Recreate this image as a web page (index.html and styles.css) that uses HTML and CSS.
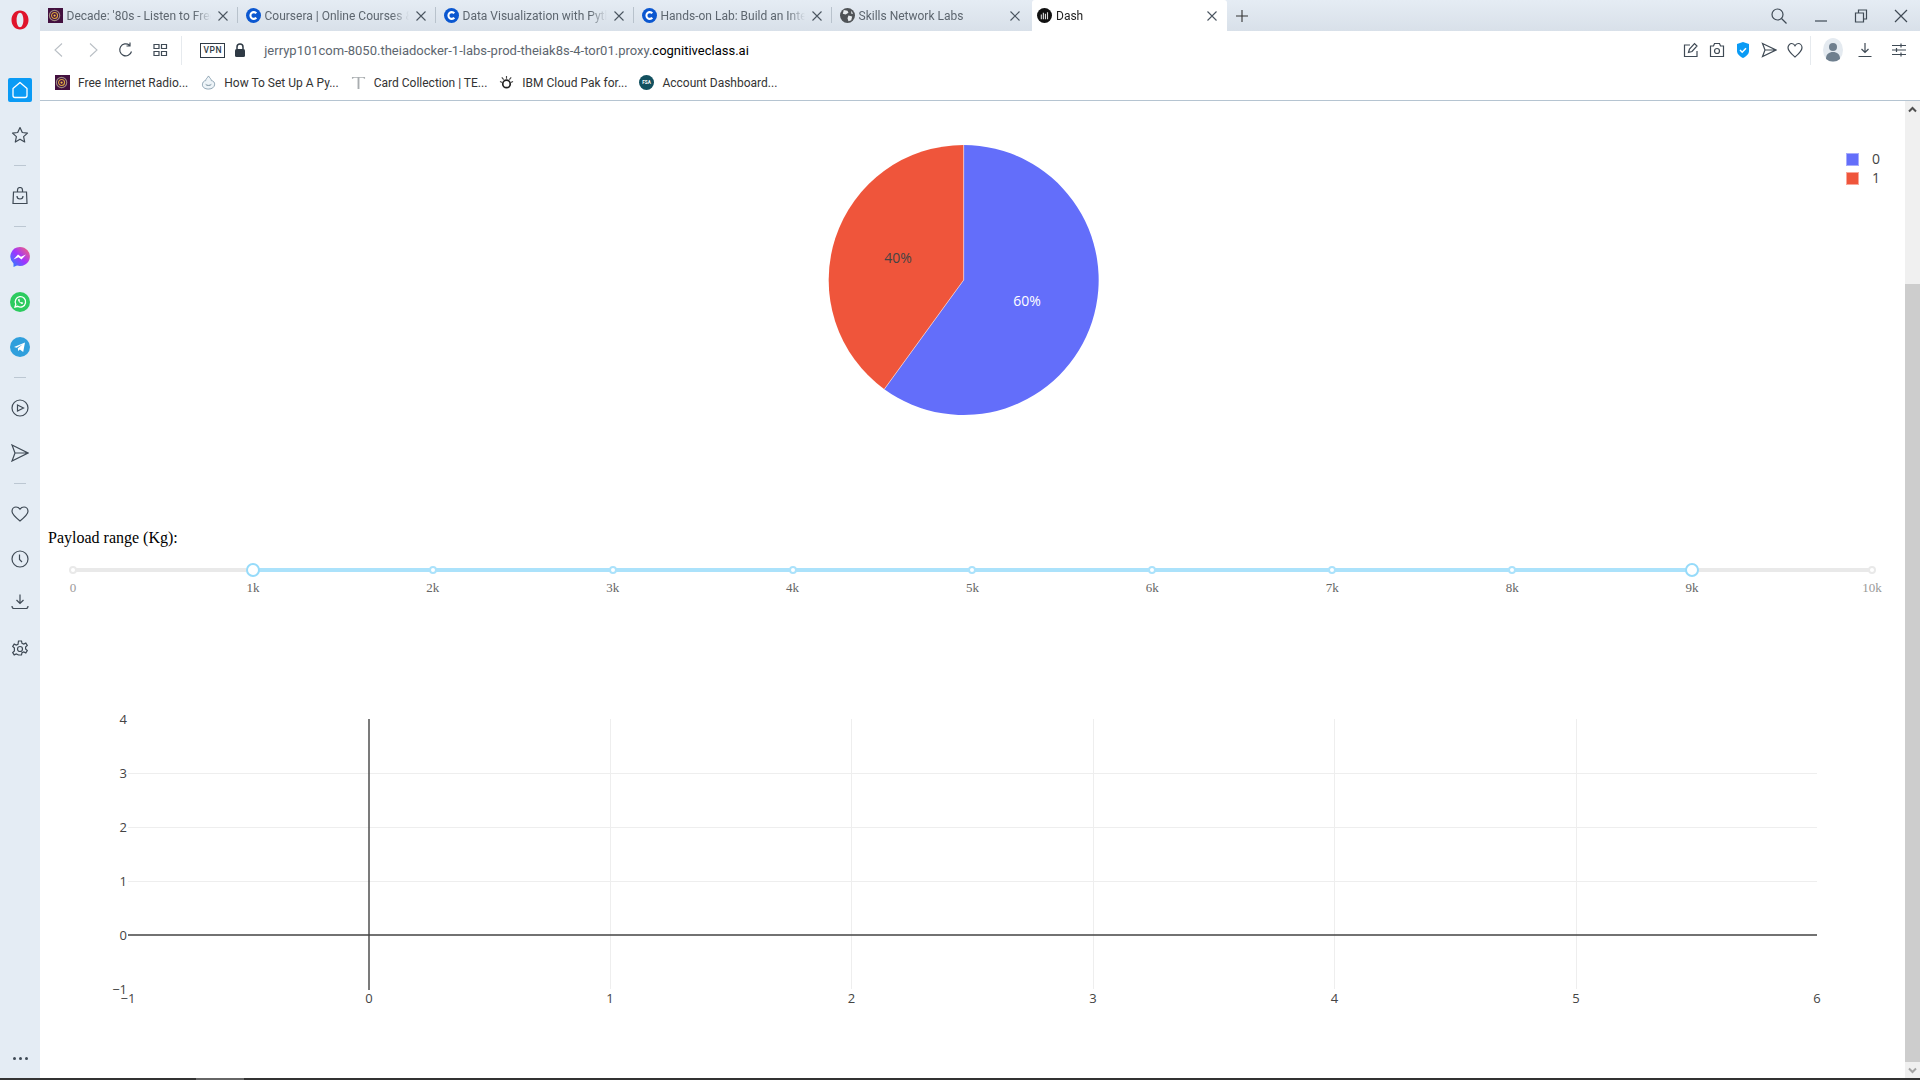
FILE: index.html
```html
<!DOCTYPE html>
<html lang="en">
<head>
    <meta charset="UTF-8">
    <title>Dash</title>
    <link rel="stylesheet" href="styles.css">
</head>
<body>
    <svg class="defs" width="0" height="0">
        <symbol id="fav-decade" viewBox="0 0 16 16">
            <rect width="16" height="16" fill="#43103f"/>
            <circle cx="7" cy="8" r="5.5" fill="none" stroke="#9c8a80" stroke-width="1.2"/>
            <circle cx="7" cy="8" r="3.2" fill="none" stroke="#d9a441" stroke-width="1.2"/>
            <circle cx="7" cy="8" r="1.2" fill="#f0c04a"/>
        </symbol>
        <symbol id="fav-coursera" viewBox="0 0 16 16">
            <circle cx="8" cy="8" r="8" fill="#0b57d0"/>
            <path d="M11 5.6A3.6 3.6 0 1 0 11 10.4" fill="none" stroke="#fff" stroke-width="2.2"/>
        </symbol>
        <symbol id="fav-globe" viewBox="0 0 16 16">
            <circle cx="8" cy="8" r="8" fill="#4f5357"/>
            <path d="M4 2l4 1 1 2-3 2-3-1zM9 8l4 1-1 4-3 1-1-3zM12 3l2 3-2 0z" fill="#e8ecef"/>
        </symbol>
        <symbol id="fav-dash" viewBox="0 0 16 16">
            <circle cx="8" cy="8" r="8" fill="#111"/>
            <path d="M4 7h1.2v5H4zM6.2 5h1.2v7H6.2zM8.4 6h1.2v6H8.4zM10.6 4.500h1.200V12h-1.200z" fill="#d9d9d9"/>
        </symbol>
        <symbol id="fav-cloud" viewBox="0 0 16 16">
            <path d="M8 1c1 2 3 3 3 5 2 0 4 2 3.500 4.500S12 15 8 15 1.500 13 1.500 10.500 3 6 5 6c0-2 2-3 3-5z" fill="#eef4f8" stroke="#8aa0b0"/>
            <path d="M5 10c1 1.500 5 1.500 6 0" fill="none" stroke="#6f8796"/>
        </symbol>
        <symbol id="fav-t" viewBox="0 0 16 16">
            <path d="M1 2h14v2h-1l-1-1H9v12H7V3H3L2 4H1z" fill="#a9adb0"/>
        </symbol>
        <symbol id="fav-ibm" viewBox="0 0 16 16">
            <circle cx="8" cy="9.500" r="4" fill="none" stroke="#222" stroke-width="1.800"/>
            <path d="M8 1v3M3 2.500l2 2.500M13 2.500l-2 2.500M1 7l2.500 1M15 7l-2.500 1" stroke="#444" stroke-width="1.200"/>
        </symbol>
        <symbol id="x" viewBox="0 0 12 12">
            <path d="M1.500 1.500l9 9M10.500 1.500l-9 9" fill="none" stroke="currentColor" stroke-width="1.100"/>
        </symbol>
    </svg>

    <div class="window">
        <nav class="sidebar">
            <svg class="opera" width="20" height="20" viewBox="0 0 20 20"><path fill-rule="evenodd" d="M10 .5c5 0 8.500 4.200 8.500 9.500s-3.500 9.500-8.500 9.500S1.500 15.300 1.500 10 5 .5 10 .5zm0 2.300C8 2.800 6.600 6 6.600 10s1.400 7.200 3.400 7.200 3.400-3.200 3.400-7.200S12 2.800 10 2.800z" fill="#e0142b"/></svg>
            <div class="side-group">
                <div class="side-item home"><svg width="20" height="20" viewBox="0 0 20 20"><path d="M10 2.500L3 8.500v7a2 2 0 0 0 2 2h10a2 2 0 0 0 2-2v-7z" fill="none" stroke="#fff" stroke-width="1.300" stroke-linejoin="round"/></svg></div>
                <div class="side-item"><svg width="18" height="18" viewBox="0 0 18 18"><path d="M9 1.500l2.300 5 5.200.6-3.900 3.500 1.100 5.400L9 13.200 4.300 16l1.100-5.400L1.500 7.100l5.200-.6z" class="ln" stroke-linejoin="round"/></svg></div>
            </div>
            <div class="side-sep"></div>
            <div class="side-group">
                <div class="side-item"><svg width="18" height="18" viewBox="0 0 18 18"><path d="M2.500 5h13l.5 11.500H2zM6.500 5V3a2.500 2.500 0 0 1 5 0v2M6 9c0 4 6 4 6 0" class="ln"/></svg></div>
            </div>
            <div class="side-sep"></div>
            <div class="side-group">
                <div class="side-item"><svg width="20" height="20" viewBox="0 0 20 20"><defs><linearGradient id="msg" x1="0" y1="1" x2="1" y2="0"><stop offset="0" stop-color="#1e8bff"/><stop offset=".5" stop-color="#a033ff"/><stop offset="1" stop-color="#ff6968"/></linearGradient></defs><path d="M10 0a10 9.500 0 1 1-3 18.600L3.500 20v-3.500A9.500 9.500 0 0 1 10 0z" fill="url(#msg)"/><path d="M3.500 12.500l4.500-5 3 2.200 5-2.200-4.500 5-3-2.200z" fill="#fff"/></svg></div>
                <div class="side-item"><svg width="20" height="20" viewBox="0 0 20 20"><circle cx="10" cy="10" r="10" fill="#2ccb5f"/><path d="M5 15l.8-2.800A5.200 5.200 0 1 1 7.800 14.300z" fill="none" stroke="#fff" stroke-width="1.300"/><path d="M8 7.500c0 2 2.500 4.500 4.500 4.500l.7-1.200-1.500-.8-.7.600c-.7-.3-1.300-1-1.600-1.600l.6-.7-.8-1.500z" fill="#fff"/></svg></div>
                <div class="side-item"><svg width="20" height="20" viewBox="0 0 20 20"><circle cx="10" cy="10" r="10" fill="#2f9fdc"/><path d="M4 10l11-4.500-1.800 9.500-3.400-2.400-1.600 1.500-.4-2.800 5-4-6.200 3.400z" fill="#fff"/></svg></div>
            </div>
            <div class="side-sep"></div>
            <div class="side-group">
                <div class="side-item"><svg width="18" height="18" viewBox="0 0 18 18"><circle cx="9" cy="9" r="8" class="ln"/><path d="M6.500 6l6 3-6 3z" class="ln"/></svg></div>
                <div class="side-item"><svg width="18" height="18" viewBox="0 0 18 18"><path d="M1 1l16 8-16 8 3-8zM4 9h13" class="ln"/></svg></div>
            </div>
            <div class="side-sep"></div>
            <div class="side-group">
                <div class="side-item"><svg width="18" height="18" viewBox="0 0 18 18"><path d="M9 16C4 12 1 9.500 1 6.300 1 3.800 3 2 5 2c1.700 0 3 .8 4 2.200C10 2.800 11.300 2 13 2c2 0 4 1.800 4 4.300C17 9.500 14 12 9 16z" class="ln"/></svg></div>
                <div class="side-item"><svg width="18" height="18" viewBox="0 0 18 18"><circle cx="9" cy="9" r="8" class="ln"/><path d="M8.500 4.500V9.500l2.500 2.500" class="ln"/></svg></div>
                <div class="side-item side-dl"><svg width="18" height="18" viewBox="0 0 18 18"><path d="M9 1.500V10M5.500 7L9 10.500 12.500 7M1 13c0 2 1 2.500 2 2.500h12c1 0 2-.5 2-2.500" class="ln"/></svg></div>
                <div class="side-item side-gear"><svg width="18" height="18" viewBox="0 0 18 18"><path d="M7.500 1h3l.5 2.300 1.700.8 2.100-1 1.500 2.400-1.700 1.600v1.800l1.700 1.600-1.500 2.400-2.100-1-1.700.8-.5 2.300h-3L7 14.700l-1.700-.8-2.100 1-1.500-2.400 1.700-1.600V8.100L1.700 6.500l1.500-2.400 2.100 1L7 4.300z" class="ln"/><circle cx="9" cy="9" r="2.500" class="ln"/></svg></div>
            </div>
            <div class="side-dots"><span></span><span></span><span></span></div>
        </nav>

        <div class="main">
            <div class="tabstrip">
                <div class="tab"><svg class="fav"><use href="#fav-decade"/></svg><span class="title">Decade: '80s - Listen to Free Radio Online</span><svg class="close"><use href="#x"/></svg></div>
                <div class="tab"><svg class="fav"><use href="#fav-coursera"/></svg><span class="title">Coursera | Online Courses &amp; Credentials</span><svg class="close"><use href="#x"/></svg></div>
                <div class="tab"><svg class="fav"><use href="#fav-coursera"/></svg><span class="title">Data Visualization with Python Course</span><svg class="close"><use href="#x"/></svg></div>
                <div class="tab"><svg class="fav"><use href="#fav-coursera"/></svg><span class="title">Hands-on Lab: Build an Interactive Dashboard</span><svg class="close"><use href="#x"/></svg></div>
                <div class="tab last"><svg class="fav"><use href="#fav-globe"/></svg><span class="title">Skills Network Labs</span><svg class="close"><use href="#x"/></svg></div>
                <div class="tab active"><svg class="fav"><use href="#fav-dash"/></svg><span class="title">Dash</span><svg class="close"><use href="#x"/></svg></div>
                <div class="newtab"><svg width="14" height="14" viewBox="0 0 14 14"><path d="M7 1v12M1 7h12" stroke="#333" fill="none" stroke-width="1.100"/></svg></div>
                <div class="winbtns">
                    <svg width="18" height="18" viewBox="0 0 18 18"><circle cx="7.500" cy="7.500" r="5.500" class="ln"/><path d="M11.500 11.500l5 5" class="ln"/></svg>
                    <svg width="14" height="14" viewBox="0 0 14 14"><path d="M1 12h12" class="ln"/></svg>
                    <svg width="14" height="14" viewBox="0 0 14 14"><path d="M1.500 4h8v9h-8zM4.500 4V1h8v9H9.500" class="ln"/></svg>
                    <svg width="14" height="14" viewBox="0 0 14 14"><path d="M1 1l12 12M13 1L1 13" class="ln"/></svg>
                </div>
            </div>

            <div class="toolbar">
                <div class="tool-btn"><svg width="16" height="16" viewBox="0 0 16 16"><path d="M11 1.500L4 8l7 6.500" fill="none" stroke="#b9bfc5" stroke-width="1.100"/></svg></div>
                <div class="tool-btn"><svg width="16" height="16" viewBox="0 0 16 16"><path d="M5 1.500L12 8l-7 6.500" fill="none" stroke="#b9bfc5" stroke-width="1.100"/></svg></div>
                <div class="tool-btn"><svg width="16" height="16" viewBox="0 0 16 16"><path d="M13.500 9.500A6 6 0 1 1 11.500 3.200M12 .5v3.500H8.500" class="ln"/></svg></div>
                <div class="tool-btn"><svg width="16" height="16" viewBox="0 0 16 16"><path d="M2 2.500h5v4H2zM9.500 2.500h5v4h-5zM2 9.500h5v4H2zM9.500 9.500h5v4h-5z" class="ln"/></svg></div>
                <div class="tool-sep"></div>
                <span class="vpn">VPN</span>
                <svg class="lock" width="12" height="14" viewBox="0 0 12 14"><path d="M3 6V4a3 3 0 0 1 6 0v2" fill="none" stroke="#2f3a45" stroke-width="1.500"/><rect x="1" y="6" width="10" height="8" rx="1.500" fill="#2f3a45"/></svg>
                <div class="url"><span class="url-dim">jerryp101com-8050.theiadocker-1-labs-prod-theiak8s-4-tor01.proxy.</span>cognitiveclass.ai</div>
                <div class="tool-right">
                    <svg width="16" height="16" viewBox="0 0 16 16"><path d="M7 3H1.500v11.500H14V9M5.500 10.500l1-3.500 5-5.500 2.500 2.500-5 5.500z" class="ln"/></svg>
                    <svg width="16" height="16" viewBox="0 0 16 16"><path d="M1.500 4h3l1-2.500h5l1 2.500h3v10.500h-13z" class="ln"/><circle cx="8" cy="9" r="2.500" class="ln"/></svg>
                    <svg width="16" height="16" viewBox="0 0 16 16"><path d="M8 0l6 2v7c0 3-3 5.500-6 7-3-1.500-6-4-6-7V2z" fill="#0a9bf5"/><path d="M5 8l2.200 2.200L11 6.200" fill="none" stroke="#fff" stroke-width="1.500"/></svg>
                    <svg width="16" height="16" viewBox="0 0 16 16"><path d="M1.500 1.500L15 8 1.500 14.500 4 8zM4 8h11" class="ln"/></svg>
                    <svg width="16" height="16" viewBox="0 0 16 16"><path d="M8 15C4 11.500 1 9 1 5.700 1 3.500 2.700 1.500 4.700 1.500 6 1.500 7.300 2.300 8 3.700 8.700 2.300 10 1.500 11.300 1.500 13.300 1.500 15 3.500 15 5.700 15 9 12 11.500 8 15z" class="ln"/></svg>
                </div>
                <div class="tool-sep right"></div>
                <svg class="avatar" width="20" height="24" viewBox="0 0 20 24"><ellipse cx="10" cy="12" rx="10" ry="12" fill="#e4eaf0"/><circle cx="10" cy="9" r="4" fill="#6f7f8e"/><path d="M3 21c0-5 3-7 7-7s7 2 7 7a11 11 0 0 1-14 0z" fill="#6f7f8e"/></svg>
                <svg class="tool-dl" width="16" height="16" viewBox="0 0 16 16"><path d="M8 1v9M4.500 7L8 10.500 11.500 7M1.500 14.500h13" class="ln"/></svg>
                <svg class="tool-menu" width="16" height="16" viewBox="0 0 16 16"><path d="M1 3.500h14M1 8h14M1 12.500h14M10 1.500v4M5.500 6v4M10 10.500v4" class="ln"/></svg>
            </div>

            <div class="bookmarks">
                <div class="bookmark"><svg class="fav"><use href="#fav-decade"/></svg>Free Internet Radio...</div>
                <div class="bookmark"><svg class="fav"><use href="#fav-cloud"/></svg>How To Set Up A Py...</div>
                <div class="bookmark"><svg class="fav"><use href="#fav-t"/></svg>Card Collection | TE...</div>
                <div class="bookmark"><svg class="fav"><use href="#fav-ibm"/></svg>IBM Cloud Pak for...</div>
                <div class="bookmark"><svg class="fav" viewBox="0 0 16 16"><circle cx="8" cy="8" r="8" fill="#12505f"/><text x="8" y="10" text-anchor="middle" class="fsa">FSA</text></svg>Account Dashboard...</div>
            </div>

            <div class="viewport">
                <div class="page">
                    <svg class="pie" viewBox="40 101 1865 420" width="1865" height="420">
                        <path d="M963.700 280V145A135 135 0 1 1 884.300 389.200Z" fill="#636efa"/>
                        <path d="M963.700 280L884.300 389.200A135 135 0 0 1 963.700 145Z" fill="#ef553b"/>
                        <path d="M963.700 145V280L884.300 389.200" fill="none" stroke="#fff" stroke-opacity=".5" stroke-width="1"/>
                        <text x="1027" y="306" class="plot-text white">60%</text>
                        <text x="898" y="263" class="plot-text">40%</text>
                        <rect x="1846.500" y="153.500" width="12" height="12" fill="#636efa" stroke="#a6acfc"/>
                        <rect x="1846.500" y="172.500" width="12" height="12" fill="#ef553b" stroke="#f9a79a"/>
                        <text x="1876" y="164" class="plot-text">0</text>
                        <text x="1876" y="183" class="plot-text">1</text>
                    </svg>
                    <label class="range-label">Payload range (Kg):</label>
                    <div class="slider">
                        <div class="rail"></div>
                        <div class="track" style="left: 10%; width: 80%"></div>
                        <div class="marks">
                            <div class="mark"><i class="dot"></i><span>0</span></div>
                            <div class="mark on"><i class="dot"></i><span>1k</span></div>
                            <div class="mark on"><i class="dot"></i><span>2k</span></div>
                            <div class="mark on"><i class="dot"></i><span>3k</span></div>
                            <div class="mark on"><i class="dot"></i><span>4k</span></div>
                            <div class="mark on"><i class="dot"></i><span>5k</span></div>
                            <div class="mark on"><i class="dot"></i><span>6k</span></div>
                            <div class="mark on"><i class="dot"></i><span>7k</span></div>
                            <div class="mark on"><i class="dot"></i><span>8k</span></div>
                            <div class="mark on"><i class="dot"></i><span>9k</span></div>
                            <div class="mark"><i class="dot"></i><span>10k</span></div>
                        </div>
                        <div class="handle" style="left: 10%"></div>
                        <div class="handle" style="left: 90%"></div>
                    </div>
                    <svg class="scatter" viewBox="40 700 1865 320" width="1865" height="320">
                        <g class="grid">
                            <path d="M128 773.500H1817M128 827.500H1817M128 881.500H1817"/>
                            <path d="M610.500 719V989M851.500 719V989M1093.500 719V989M1334.500 719V989M1576.500 719V989"/>
                        </g>
                        <path d="M128 935H1817M369 719V990" fill="none" stroke="#444" stroke-width="1.400"/>
                        <g class="plot-text tick ytick">
                            <text x="127" y="724">4</text>
                            <text x="127" y="778">3</text>
                            <text x="127" y="832">2</text>
                            <text x="127" y="886">1</text>
                            <text x="127" y="940">0</text>
                            <text x="127" y="994">−1</text>
                        </g>
                        <g class="plot-text tick">
                            <text x="128" y="1003">−1</text>
                            <text x="369" y="1003">0</text>
                            <text x="610" y="1003">1</text>
                            <text x="851.500" y="1003">2</text>
                            <text x="1093" y="1003">3</text>
                            <text x="1334.500" y="1003">4</text>
                            <text x="1576" y="1003">5</text>
                            <text x="1817" y="1003">6</text>
                        </g>
                    </svg>
                </div>
                <div class="scrollbar">
                    <div class="sb-btn"><svg width="9" height="7" viewBox="0 0 9 7"><path d="M1 5.500l3.500-3.500L8 5.500" fill="none" stroke="#505050" stroke-width="2"/></svg></div>
                    <div class="sb-gap"></div>
                    <div class="sb-thumb"></div>
                    <div class="sb-btn"><svg width="9" height="7" viewBox="0 0 9 7"><path d="M1 1.500L4.500 5 8 1.500" fill="none" stroke="#a3a3a3" stroke-width="2"/></svg></div>
                </div>
            </div>
        </div>
    </div>
    <div class="taskbar"><div class="taskbar-item"></div></div>
</body>
</html>
```

FILE: styles.css
```css
html, body {
    margin: 0;
    height: 100%;
    overflow: hidden;
    background: #fff;
}
body {
    font-family: Roboto, "Liberation Sans", sans-serif;
    font-size: 12px;
    color: #333;
}
.defs {
    position: absolute;
}
.ln {
    fill: none;
    stroke: #3f4a55;
    stroke-width: 1.2;
}

/* window frame */
.window {
    display: flex;
    height: 1078px;
}
.taskbar {
    height: 2px;
    background: #333;
    padding-left: 196px;
}
.taskbar-item {
    width: 48px;
    height: 2px;
    background: #666;
}
.main {
    flex: 1;
    min-width: 0;
    display: flex;
    flex-direction: column;
}

/* sidebar */
.sidebar {
    width: 40px;
    flex: none;
    background: #e4ecf4;
    display: flex;
    flex-direction: column;
    align-items: center;
}
.opera {
    margin-top: 10px;
    margin-bottom: 48px;
}
.side-item {
    width: 24px;
    height: 24px;
    display: flex;
    align-items: center;
    justify-content: center;
}
.side-item + .side-item {
    margin-top: 21px;
}
.side-item.side-dl {
    margin-top: 19px;
}
.side-item.side-gear {
    margin-top: 23px;
}
.home {
    background: #0a9bf5;
    border-radius: 2px;
}
.side-sep {
    width: 12px;
    height: 1px;
    margin: 18px 0;
    background: #bcc7d2;
}
.side-dots {
    margin-top: auto;
    margin-bottom: 18px;
    display: flex;
    gap: 3px;
}
.side-dots span {
    width: 3px;
    height: 3px;
    border-radius: 50%;
    background: #3f4a55;
}

/* tabs */
.tabstrip {
    height: 31px;
    flex: none;
    display: flex;
    align-items: stretch;
    background: linear-gradient(#e5ecf4, #d8e0e9);
}
.tab {
    width: 198px;
    box-sizing: border-box;
    padding: 0 9px 0 8px;
    display: flex;
    align-items: center;
    color: #5d666f;
    position: relative;
}
.tab::after {
    content: "";
    position: absolute;
    right: 0;
    top: 7px;
    bottom: 8px;
    width: 1px;
    background: #b8c2cc;
}
.tab.last::after, .tab.active::after {
    display: none;
}
.tab.active {
    width: 195px;
    margin-left: 2px;
    padding: 0 9px 0 5px;
    background: #fff;
    color: #222;
    border-radius: 3px 3px 0 0;
}
.fav {
    width: 15px;
    height: 15px;
    flex: none;
}
.tab .title {
    flex: 1;
    min-width: 0;
    margin: 0 6px 0 3.500px;
    white-space: nowrap;
    overflow: hidden;
    -webkit-mask-image: linear-gradient(90deg, #000 88%, transparent);
    mask-image: linear-gradient(90deg, #000 88%, transparent);
}
.tab.active .title {
    margin-left: 4px;
}
.close {
    width: 12px;
    height: 12px;
    flex: none;
    color: #4a5560;
}
.newtab {
    margin-left: 8px;
    display: flex;
    align-items: center;
}
.winbtns {
    margin-left: auto;
    padding-right: 12px;
    display: flex;
    align-items: center;
    gap: 26px;
}

/* toolbar */
.toolbar {
    height: 35px;
    flex: none;
    box-sizing: border-box;
    display: flex;
    align-items: center;
    padding: 3px 0 0 2.250px;
    background: #fff;
}
.tool-btn {
    width: 33.500px;
    display: flex;
    justify-content: center;
}
.tool-sep {
    width: 1px;
    height: 29px;
    margin-left: 5px;
    background: #e6eaee;
}
.tool-sep.right {
    margin-left: 7px;
}
.vpn {
    width: 23px;
    height: 13px;
    margin-left: 18px;
    border: 1px solid #2f3a45;
    font-size: 8.500px;
    font-weight: 500;
    line-height: 13px;
    text-align: center;
    color: #2f3a45;
    letter-spacing: .5px;
}
.lock {
    margin-left: 9px;
}
.url {
    margin-left: 18px;
    font-size: 13px;
    color: #000;
    white-space: nowrap;
}
.url-dim {
    color: #5d666f;
}
.tool-right {
    margin-left: auto;
    display: flex;
    gap: 10px;
}
.avatar {
    margin-left: 12px;
}
.tool-dl {
    margin-left: 14px;
}
.tool-menu {
    margin-left: 18px;
    margin-right: 13px;
}

/* bookmarks */
.bookmarks {
    height: 35px;
    flex: none;
    box-sizing: border-box;
    border-bottom: 1px solid #b5c4d1;
    padding: 0 0 1px 15px;
    display: flex;
    align-items: center;
    gap: 12px;
    background: #fff;
}
.bookmark {
    display: flex;
    align-items: center;
    gap: 8px;
    color: #333;
    white-space: nowrap;
}
.bookmark:first-child {
    margin-right: 1px;
}
.fsa {
    font-size: 5px;
    font-weight: 700;
    fill: #fff;
}

/* page */
.viewport {
    flex: 1;
    min-height: 0;
    display: flex;
}
.page {
    flex: 1;
    min-width: 0;
    overflow: hidden;
    font-family: "Liberation Serif", serif;
    color: #000;
}
.pie, .scatter {
    display: block;
}
.plot-text {
    font-family: "Open Sans", sans-serif;
    font-size: 14px;
    fill: #444;
    text-anchor: middle;
}
.plot-text.white {
    fill: #fff;
}
.plot-text.tick {
    font-size: 13px;
}
.ytick {
    text-anchor: end;
}
.grid path {
    fill: none;
    stroke: #eee;
    stroke-width: 1;
}
.range-label {
    display: block;
    margin-left: 8px;
    font-size: 16px;
    line-height: 34px;
}
.slider {
    position: relative;
    width: 1799px;
    height: 8px;
    margin: 11px 0 0 33px;
}
.rail, .track {
    position: absolute;
    top: 2px;
    height: 4px;
    border-radius: 4px;
}
.rail {
    left: 0;
    right: 0;
    background: #e9e9e9;
}
.track {
    background: #abe2fb;
}
.marks {
    position: relative;
    display: flex;
    justify-content: space-between;
}
.mark {
    width: 0;
    display: flex;
    flex-direction: column;
    align-items: center;
    font-size: 13px;
    color: #999;
}
.mark.on {
    color: #666;
}
.dot {
    flex: none;
    width: 8px;
    height: 8px;
    box-sizing: border-box;
    border: 2px solid #e9e9e9;
    border-radius: 50%;
    background: #fff;
}
.mark.on .dot {
    border-color: #abe2fb;
}
.mark span {
    margin-top: 6px;
    line-height: 15px;
}
.handle {
    position: absolute;
    top: -3px;
    width: 14px;
    height: 14px;
    margin-left: -7px;
    box-sizing: border-box;
    border: 2px solid #96dbfa;
    border-radius: 50%;
    background: #fff;
}
.scatter {
    margin-top: 126px;
}

/* scrollbar */
.scrollbar {
    width: 15px;
    flex: none;
    background: #f0f0f0;
    display: flex;
    flex-direction: column;
}
.sb-btn {
    height: 16px;
    flex: none;
    display: flex;
    align-items: center;
    justify-content: center;
}
.sb-gap {
    height: 167px;
    flex: none;
}
.sb-thumb {
    flex: 1;
    background: #cdcdcd;
}
```
